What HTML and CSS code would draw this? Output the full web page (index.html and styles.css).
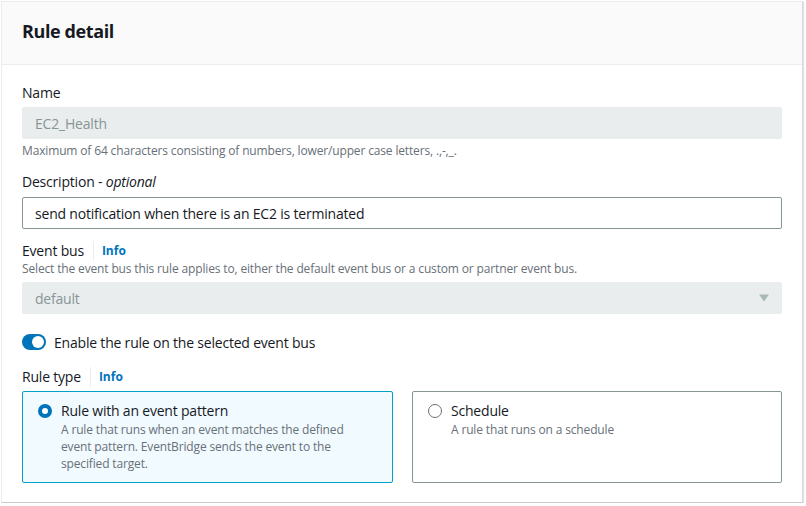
FILE: index.html
```html
<!DOCTYPE html>
<html>
<head>
<meta charset="utf-8">
<link rel="stylesheet" href="styles.css">
</head>
<body>
<div class="page">
  <section class="panel">
    <header class="panel-header">
      <h2 class="panel-title">Rule detail</h2>
    </header>
    <div class="panel-body">
      <div class="field field-name">
        <div class="label">Name</div>
        <div class="input disabled">EC2_Health</div>
        <div class="hint">Maximum of 64 characters consisting of numbers, lower/upper case letters, .,-,_.</div>
      </div>
      <div class="field field-desc">
        <div class="label">Description - <i>optional</i></div>
        <div class="input">send notification when there is an EC2 is terminated</div>
      </div>
      <div class="field field-bus">
        <div class="label label-info label-compact"><span>Event bus</span><span class="sep"></span><a class="info">Info</a></div>
        <div class="hint hint-top">Select the event bus this rule applies to, either the default event bus or a custom or partner event bus.</div>
        <div class="input disabled select"><span>default</span><svg class="caret" width="12" height="8" viewBox="0 0 12 8"><path d="M1 0.5 L11 0.5 L6 7.5 Z" fill="#aab7b8"/></svg></div>
      </div>
      <div class="toggle-row">
        <span class="toggle"><span class="knob"></span></span>
        <span class="toggle-label">Enable the rule on the selected event bus</span>
      </div>
      <div class="field field-type">
        <div class="label label-info"><span>Rule type</span><span class="sep"></span><a class="info">Info</a></div>
        <div class="cards">
          <div class="card selected">
            <span class="radio on"></span>
            <div class="card-text">
              <div class="card-title">Rule with an event pattern</div>
              <div class="card-desc">A rule that runs when an event matches the defined event pattern. EventBridge sends the event to the specified target.</div>
            </div>
          </div>
          <div class="card">
            <span class="radio"></span>
            <div class="card-text">
              <div class="card-title">Schedule</div>
              <div class="card-desc">A rule that runs on a schedule</div>
            </div>
          </div>
        </div>
      </div>
    </div>
  </section>
</div>
</body>
</html>
```

FILE: styles.css
```css
* { box-sizing: border-box; }
html, body { margin: 0; padding: 0; background: #ffffff; }
body {
  font-family: "Open Sans", "Noto Sans", Arial, sans-serif;
  color: #16191f;
  font-size: 14px;
  letter-spacing: -0.2px;
}
.page { padding: 1px 0 0 1px; }
.panel {
  width: 802px;
  height: 502px;
  border: 1px solid #eaeded;
  border-right-color: #d5dbdb;
  border-bottom-color: #c6cccc;
  background: #fff;
  box-shadow: 1px 1px 1px rgba(0,28,36,0.12);
}
.panel-header {
  height: 63px;
  background: #fafafa;
  border-bottom: 1px solid #eaeded;
  padding: 0 20px;
  display: flex;
  align-items: center;
}
.panel-title {
  margin: 0;
  font-size: 18px;
  font-weight: 700;
  letter-spacing: -0.4px;
  line-height: 22px;
  padding-bottom: 4px;
}
.panel-body { padding: 17px 20px 0 20px; }
.label {
  line-height: 22px;
  height: 22px;
  font-size: 14px;
  color: #16191f;
}
.label i { font-style: italic; }
.label.label-compact { height: 20px; line-height: 20px; }
.input {
  height: 32px;
  border: 1px solid #aab7b8;
  border-radius: 2px;
  padding: 0 12px;
  display: flex;
  align-items: center;
  font-size: 14px;
  color: #16191f;
  margin-top: 3px;
}
.input.disabled {
  background: #eaeded;
  border-color: #eaeded;
  color: #879596;
}
.hint {
  font-size: 12px;
  line-height: 16px;
  color: #687078;
  margin-top: 4px;
  letter-spacing: -0.15px;
}
.field-desc { margin-top: 12px; }
.field-desc .input { margin-top: 4px; border-color: #879596; }
.field-bus { margin-top: 12px; }
.label-info { display: flex; align-items: center; }
.sep {
  width: 1px;
  height: 20px;
  background: #eaeded;
  margin: 0 8px 0 9px;
}
.info {
  color: #0073bb;
  font-weight: 700;
  font-size: 12px;
  letter-spacing: 0;
}
.hint.hint-top { margin-top: 0; }
.select { justify-content: space-between; margin-top: 5px; padding-right: 11px; }
.caret { display: block; }
.toggle-row {
  display: flex;
  align-items: center;
  margin-top: 19px;
  height: 18px;
}
.toggle {
  width: 24px;
  height: 16px;
  border-radius: 8px;
  background: #0073bb;
  position: relative;
  display: inline-block;
}
.knob {
  position: absolute;
  width: 12px;
  height: 12px;
  border-radius: 50%;
  background: #fff;
  top: 2px;
  right: 2px;
}
.toggle-label { margin-left: 8px; font-size: 14px; }
.field-type { margin-top: 15px; }
.cards {
  display: grid;
  grid-template-columns: 371px 370px;
  column-gap: 19px;
  margin-top: 3px;
}
.card {
  border: 1px solid #879596;
  border-radius: 2px;
  height: 92px;
  padding: 9px 16px 0 15px;
  display: flex;
  align-items: flex-start;
}
.card.selected {
  border-color: #00a1c9;
  background: #f1faff;
}
.radio {
  flex: none;
  width: 14px;
  height: 14px;
  border-radius: 50%;
  border: 1px solid #687078;
  background: #fff;
  margin-top: 3px;
  margin-right: 9px;
}
.radio.on {
  border: 4px solid #0073bb;
}
.card-title { font-size: 14px; line-height: 20px; }
.card-desc { font-size: 12px; line-height: 17px; color: #687078; letter-spacing: -0.15px; }
```
